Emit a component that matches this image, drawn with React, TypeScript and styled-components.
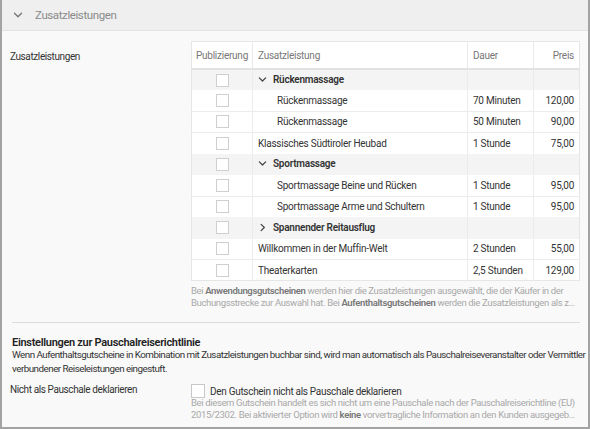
import styled, { createGlobalStyle } from 'styled-components'

const GlobalStyle = createGlobalStyle`
    html, body {
        margin: 0;
        padding: 0;
        background: #f9f9f9;
    }
    body {
        font-family: "Source Sans Pro", Roboto, "Liberation Sans", sans-serif;
        color: #333;
    }
`

const Frame = styled.div`
    width: 590px;
    height: 429px;
    box-sizing: border-box;
    border: 2px solid #a3a3a3;
    border-top: none;
    background: #f9f9f9;
    overflow: hidden;
`

const PanelHeader = styled.div`
    height: 31px;
    box-sizing: border-box;
    display: flex;
    align-items: center;
    gap: 12px;
    padding-left: 11px;
    background: #efefef;
    border-bottom: 1px solid #e2e2e2;
    font-size: 11.5px;
    letter-spacing: -0.4px;
    color: #8a8a8a;
`

const PanelBody = styled.div`
    padding: 10px 8px 0 8px;
`

const FieldRow = styled.div<{ $mt?: number }>`
    display: grid;
    grid-template-columns: 181px 1fr;
    margin-top: ${p => p.$mt || 0}px;
`

const FieldLabel = styled.div<{ $top: number }>`
    font-size: 10px;
    letter-spacing: -0.4px;
    color: #333;
    padding-top: ${p => p.$top}px;
`

const Table = styled.table`
    width: 388px;
    border-collapse: collapse;
    background: #fff;
    border: 1px solid #e6e6e6;
    font-size: 10px;
    letter-spacing: -0.25px;
    table-layout: fixed;
`

const Th = styled.th<{ $align?: string }>`
    height: 26px;
    font-weight: normal;
    color: #777;
    text-align: ${p => p.$align || 'left'};
    padding: 0 5px;
    border-left: 1px solid #e9e9e9;
    border-bottom: 2px solid #e2e2e2;
    &:first-child { border-left: none; text-align: center; padding: 0; }
`

const Tr = styled.tr<{ $group?: boolean }>`
    height: 21.2px;
    background: ${p => (p.$group ? '#f4f4f4' : '#fff')};
    font-weight: ${p => (p.$group ? 600 : 'normal')};
    & + & td { border-top: 1px solid #ececec; }
`

const Td = styled.td<{ $align?: string; $indent?: boolean }>`
    padding: 0 5px 0 ${p => (p.$indent ? '24px' : '5px')};
    text-align: ${p => p.$align || 'left'};
    border-left: 1px solid #ececec;
    color: #333;
    white-space: nowrap;
    &:first-child { border-left: none; text-align: center; padding: 0; }
`

const Box = styled.span`
    display: inline-block;
    width: 11px;
    height: 11px;
    border: 1px solid #cfcfcf;
    background: #fff;
    vertical-align: middle;
`

const GroupName = styled.span`
    display: inline-flex;
    align-items: center;
    gap: 6px;
`

const Help = styled.div<{ $mt?: number }>`
    width: 388px;
    font-size: 9.5px;
    letter-spacing: -0.35px;
    line-height: 12px;
    color: #a8a8a8;
    margin-top: ${p => (p.$mt === undefined ? 4 : p.$mt)}px;
    b { color: #777; font-weight: 600; }
`

const HelpLine = styled.div`
    white-space: nowrap;
    overflow: hidden;
    text-overflow: ellipsis;
`

const Divider = styled.hr`
    border: none;
    border-top: 1px solid #dcdcdc;
    margin: 13px 0 0 2px;
`

const SectionTitle = styled.h3`
    margin: 13px 0 0 2px;
    font-size: 11px;
    line-height: 13px;
    letter-spacing: -0.3px;
    font-weight: 600;
    color: #222;
`

const SectionText = styled.p`
    margin: -1px -8px 0 2px;
    font-size: 9.8px;
    letter-spacing: -0.5px;
    line-height: 14px;
    color: #333;
    white-space: nowrap;
`

const CheckRow = styled.label`
    display: flex;
    align-items: center;
    gap: 5px;
    font-size: 10px;
    letter-spacing: -0.3px;
    color: #333;
`

const BigBox = styled.span`
    width: 12px;
    height: 12px;
    border: 1px solid #c8c8c8;
    background: #fff;
`

const Chevron = ({ dir, size = 9, color = '#444' }: { dir: 'down' | 'right'; size?: number; color?: string }) => (
    <svg width={size} height={size} viewBox="0 0 10 10" fill="none" stroke={color} strokeWidth="1.4" strokeLinecap="round" strokeLinejoin="round">
        {dir === 'down' ? <path d="M1.5 3.2 L5 6.7 L8.5 3.2" /> : <path d="M3.5 1.5 L7 5 L3.5 8.5" />}
    </svg>
)

type Row = { name: string; dauer?: string; preis?: string; group?: 'open' | 'closed'; indent?: boolean }

const rows: Row[] = [
    { name: 'Rückenmassage', group: 'open' },
    { name: 'Rückenmassage', dauer: '70 Minuten', preis: '120,00', indent: true },
    { name: 'Rückenmassage', dauer: '50 Minuten', preis: '90,00', indent: true },
    { name: 'Klassisches Südtiroler Heubad', dauer: '1 Stunde', preis: '75,00' },
    { name: 'Sportmassage', group: 'open' },
    { name: 'Sportmassage Beine und Rücken', dauer: '1 Stunde', preis: '95,00', indent: true },
    { name: 'Sportmassage Arme und Schultern', dauer: '1 Stunde', preis: '95,00', indent: true },
    { name: 'Spannender Reitausflug', group: 'closed' },
    { name: 'Willkommen in der Muffin-Welt', dauer: '2 Stunden', preis: '55,00' },
    { name: 'Theaterkarten', dauer: '2,5 Stunden', preis: '129,00' },
]

const App = () => {
    return (
        <>
            <GlobalStyle />
            <Frame>
                <PanelHeader>
                    <Chevron dir="down" size={10} color="#777" />
                    <span>Zusatzleistungen</span>
                </PanelHeader>
                <PanelBody>
                    <FieldRow>
                        <FieldLabel $top={10}>Zusatzleistungen</FieldLabel>
                        <div>
                            <Table>
                                <colgroup>
                                    <col style={{ width: 61 }} />
                                    <col style={{ width: 215 }} />
                                    <col style={{ width: 66 }} />
                                    <col style={{ width: 46 }} />
                                </colgroup>
                                <thead>
                                    <tr>
                                        <Th>Publizierung</Th>
                                        <Th>Zusatzleistung</Th>
                                        <Th>Dauer</Th>
                                        <Th $align="right">Preis</Th>
                                    </tr>
                                </thead>
                                <tbody>
                                    {rows.map((r, i) => (
                                        <Tr key={i} $group={!!r.group}>
                                            <Td><Box /></Td>
                                            <Td $indent={r.indent}>
                                                {r.group ? (
                                                    <GroupName>
                                                        <Chevron dir={r.group === 'open' ? 'down' : 'right'} />
                                                        {r.name}
                                                    </GroupName>
                                                ) : r.name}
                                            </Td>
                                            <Td>{r.dauer}</Td>
                                            <Td $align="right">{r.preis}</Td>
                                        </Tr>
                                    ))}
                                </tbody>
                            </Table>
                            <Help>
                                <HelpLine>Bei <b>Anwendungsgutscheinen</b> werden hier die Zusatzleistungen ausgewählt, die der Käufer in der</HelpLine>
                                <HelpLine>Buchungsstrecke zur Auswahl hat. Bei <b>Aufenthaltsgutscheinen</b> werden die Zusatzleistungen als zubuchbare Leistungen angeboten.</HelpLine>
                            </Help>
                        </div>
                    </FieldRow>
                    <Divider />
                    <SectionTitle>Einstellungen zur Pauschalreiserichtlinie</SectionTitle>
                    <SectionText>
                        Wenn Aufenthaltsgutscheine in Kombination mit Zusatzleistungen buchbar sind, wird man automatisch als Pauschalreiseveranstalter oder Vermittler
                        <br />
                        verbundener Reiseleistungen eingestuft.
                    </SectionText>
                    <FieldRow $mt={8}>
                        <FieldLabel $top={0}>Nicht als Pauschale deklarieren</FieldLabel>
                        <div>
                            <CheckRow>
                                <BigBox />
                                Den Gutschein nicht als Pauschale deklarieren
                            </CheckRow>
                            <Help $mt={-1}>
                                <HelpLine>Bei diesem Gutschein handelt es sich nicht um eine Pauschale nach der Pauschalreiserichtline (EU)</HelpLine>
                                <HelpLine>2015/2302. Bei aktivierter Option wird <b>keine</b> vorvertragliche Information an den Kunden ausgegeben. Bitte beachten Sie die Hinweise.</HelpLine>
                            </Help>
                        </div>
                    </FieldRow>
                </PanelBody>
            </Frame>
        </>
    )
}

export default App
